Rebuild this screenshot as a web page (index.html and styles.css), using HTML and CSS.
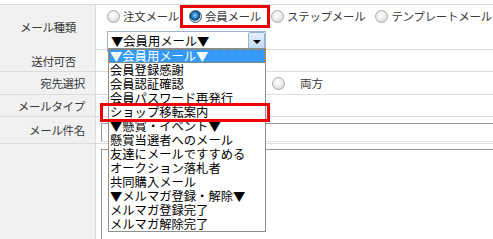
FILE: index.html
```html
<!DOCTYPE html>
<html lang="ja">
<head>
<meta charset="utf-8">
<link rel="stylesheet" href="styles.css">
</head>
<body>
<div class="form">
  <div class="row r1">
    <div class="th th-a">メール種類</div>
    <div class="td td1">
      <div class="radios">
        <label class="opt"><span class="radio"></span>注文メール</label>
        <label class="opt"><span class="radio on"></span>会員メール</label>
        <label class="opt"><span class="radio"></span>ステップメール</label>
        <label class="opt"><span class="radio"></span>テンプレートメール</label>
      </div>
      <div class="select">
        <span class="sel-text">▼会員用メール▼</span>
        <span class="sel-btn"><span class="tri"></span></span>
      </div>
    </div>
  </div>
  <div class="row r2">
    <div class="th th-b">送付可否</div>
    <div class="td"></div>
  </div>
  <div class="row r3">
    <div class="th th-c">宛先選択</div>
    <div class="td td3">
      <label class="opt both"><span class="radio"></span><span class="both-text">両方</span></label>
    </div>
  </div>
  <div class="row r4">
    <div class="th th-c">メールタイプ</div>
    <div class="td"></div>
  </div>
  <div class="row r5">
    <div class="th th-c">メール件名</div>
    <div class="td td5"><div class="input"></div></div>
  </div>
  <div class="row r6">
    <div class="th"></div>
    <div class="td td6"><div class="textarea"></div></div>
  </div>
</div>

<ul class="list">
  <li class="hl">▼会員用メール▼</li>
  <li>会員登録感謝</li>
  <li>会員認証確認</li>
  <li>会員パスワード再発行</li>
  <li>ショップ移転案内</li>
  <li>▼懸賞・イベント▼</li>
  <li>懸賞当選者へのメール</li>
  <li>友達にメールですすめる</li>
  <li>オークション落札者</li>
  <li>共同購入メール</li>
  <li>▼メルマガ登録・解除▼</li>
  <li>メルマガ登録完了</li>
  <li>メルマガ解除完了</li>
</ul>

<div class="mark mark-radio"></div>
<div class="mark mark-item"></div>
</body>
</html>
```

FILE: styles.css
```css
html, body {
  margin: 0;
  padding: 0;
  background: #ffffff;
  overflow: hidden;
  width: 493px;
  height: 239px;
}
body {
  position: relative;
  font-family: "Noto Sans CJK JP", "Noto Sans", sans-serif;
  color: #333333;
}
.form {
  margin-top: 4px;
  border-top: 1px solid #dcdcdc;
  height: 235px;
  display: flex;
  flex-direction: column;
}
.row {
  display: grid;
  grid-template-columns: 96px 1fr;
  border-bottom: 1px solid #dcdcdc;
}
.r1 { height: 44px; }
.r2, .r3, .r4 { height: 26px; }
.r5 { height: 31px; }
.r6 { flex: 1; border-bottom: none; }
.th {
  background: #f1f1f1;
  border-right: 1px solid #dcdcdc;
  font-size: 11.5px;
  line-height: 14px;
  display: flex;
  align-items: center;
  justify-content: flex-end;
  color: #3a3a3a;
  letter-spacing: -0.3px;
}
.th-a { padding-right: 19px; padding-bottom: 4px; }
.th-b { padding-right: 19px; }
.th-c { padding-right: 10px; }
.td { position: relative; }
.td1 { padding: 4px 0 0 11px; }
.radios {
  display: flex;
  align-items: center;
  height: 14px;
  font-size: 11.5px;
  color: #3a3a3a;
  letter-spacing: -0.3px;
}
.opt {
  display: flex;
  align-items: center;
  margin-right: 10px;
  white-space: nowrap;
}
.radio {
  width: 11px;
  height: 11px;
  border-radius: 50%;
  border: 1px solid #a8a8a8;
  background: radial-gradient(circle at 40% 35%, #ffffff 0%, #eeeeee 45%, #cfcfcf 100%);
  margin-right: 3px;
  flex: none;
  box-sizing: content-box;
}
.radio.on {
  border-color: #4a5a6a;
  background: radial-gradient(circle at 45% 40%, #8fd0ff 0%, #1d7cc8 35%, #0b3f72 55%, #d8dde4 62%, #c4c9d0 100%);
}
.select {
  margin-top: 8px;
  border: 1px solid #9fb6cd;
  display: flex;
  align-items: center;
  justify-content: space-between;
  background: #ffffff;
  box-sizing: border-box;
  height: 21px;
  width: 159px;
}
.sel-text {
  font-size: 12.3px;
  color: #000000;
  padding-left: 3px;
  line-height: 15px;
}
.sel-btn {
  width: 17px;
  height: 19px;
  box-sizing: border-box;
  border: 1px solid #94b4d6;
  border-radius: 2px;
  background: linear-gradient(#e4f0fc, #bcd7f4);
  display: flex;
  align-items: center;
  justify-content: center;
}
.tri {
  width: 0;
  height: 0;
  border-left: 4px solid transparent;
  border-right: 4px solid transparent;
  border-top: 4px solid #000000;
}
.td3 {
  display: flex;
  align-items: center;
  padding-left: 176px;
}
.both { font-size: 11.5px; color: #3a3a3a; }
.both-text { margin-left: 12px; }
.td5 { padding: 6px 0 0 5px; }
.input {
  height: 17px;
  width: 420px;
  border-top: 1px solid #9a9a9a;
  border-left: 1px solid #9a9a9a;
  border-bottom: 1px solid #e2e2e2;
}
.td6 { padding: 5px 0 0 5px; }
.textarea {
  height: 90px;
  width: 420px;
  border-top: 1px solid #9a9a9a;
  border-left: 1px solid #9a9a9a;
}
.list {
  position: absolute;
  left: 108px;
  top: 48px;
  width: 158px;
  box-sizing: border-box;
  margin: 0;
  padding: 0;
  list-style: none;
  border: 1px solid #8e8e8e;
  background: #ffffff;
  font-size: 12.3px;
  color: #000000;
}
.list li {
  height: 14px;
  line-height: 14px;
  padding-left: 1px;
  white-space: nowrap;
}
.list li.hl {
  background: #3399ff;
  color: #ffffff;
  outline: 1px dotted #c8782a;
  outline-offset: -1px;
}
.mark {
  position: absolute;
  border: 3px solid #ee0000;
  box-sizing: border-box;
}
.mark-radio {
  left: 180px;
  top: 5px;
  width: 90px;
  height: 23px;
}
.mark-item {
  left: 100px;
  top: 103px;
  width: 170px;
  height: 19px;
}
```
